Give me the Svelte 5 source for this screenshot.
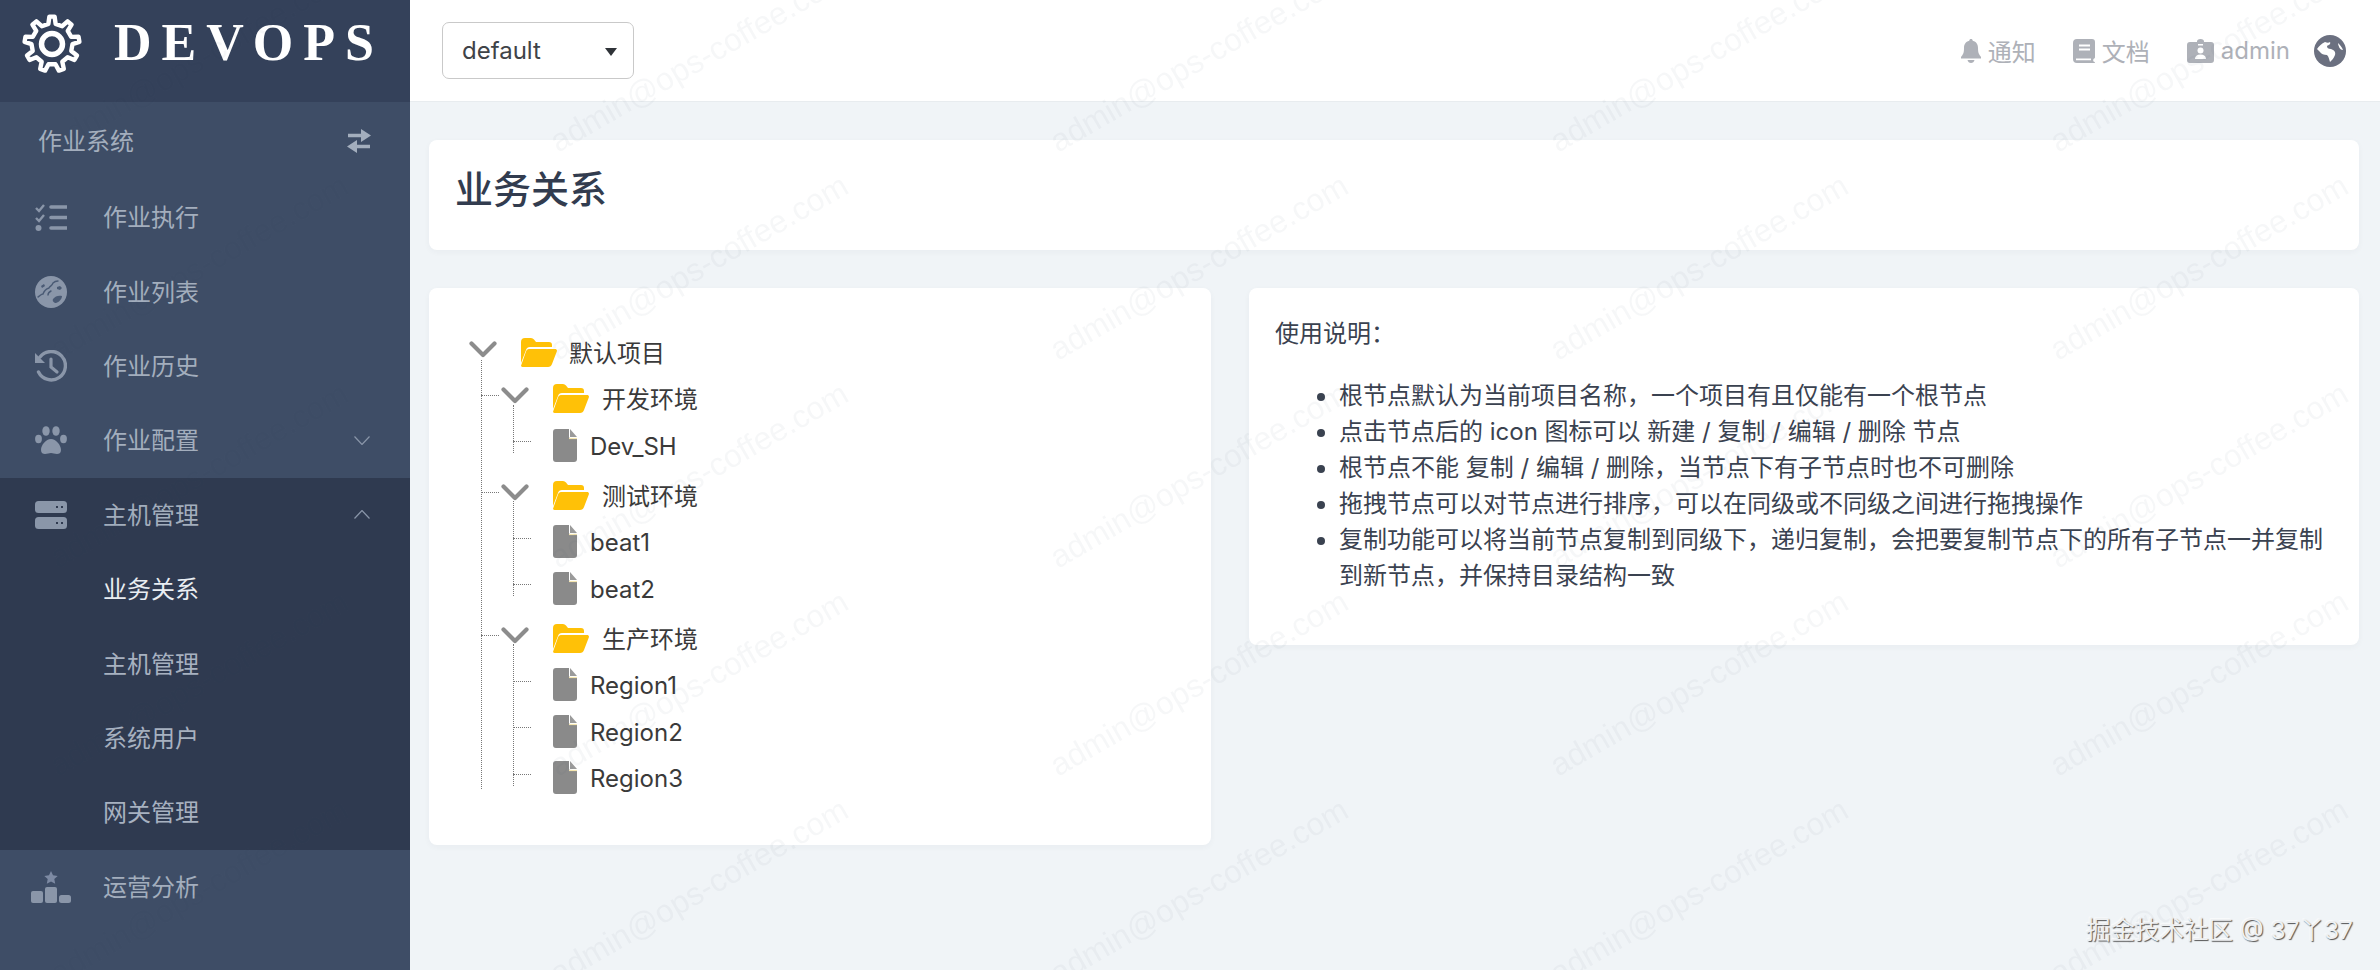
<script lang="ts">
  const menu = [
    { label: '作业执行', icon: 'tasks' },
    { label: '作业列表', icon: 'earth' },
    { label: '作业历史', icon: 'history' },
    { label: '作业配置', icon: 'paw', arrow: 'down' },
  ];
  const hostSub = [
    { label: '业务关系', active: true },
    { label: '主机管理' },
    { label: '系统用户' },
    { label: '网关管理' },
  ];
  const tree = [
    { name: '开发环境', leaves: ['Dev_SH'] },
    { name: '测试环境', leaves: ['beat1', 'beat2'] },
    { name: '生产环境', leaves: ['Region1', 'Region2', 'Region3'] },
  ];
  const notes = [
    '根节点默认为当前项目名称，一个项目有且仅能有一个根节点',
    '点击节点后的 icon 图标可以 新建 / 复制 / 编辑 / 删除 节点',
    '根节点不能 复制 / 编辑 / 删除，当节点下有子节点时也不可删除',
    '拖拽节点可以对节点进行排序，可以在同级或不同级之间进行拖拽操作',
    '复制功能可以将当前节点复制到同级下，递归复制，会把要复制节点下的所有子节点一并复制到新节点，并保持目录结构一致',
  ];

  function gearPath(cx: number, cy: number, teeth: number, ro: number, ri: number): string {
    const pts: string[] = [];
    const step = (Math.PI * 2) / teeth;
    for (let i = 0; i < teeth; i++) {
      const a = i * step - Math.PI / 2;
      const w = step * 0.17;
      const list = [
        [a - w * 1.5, ri],
        [a - w * 0.8, ro],
        [a + w * 0.8, ro],
        [a + w * 1.5, ri],
      ];
      for (const [t, r] of list) {
        pts.push(`${(cx + Math.cos(t) * r).toFixed(2)} ${(cy + Math.sin(t) * r).toFixed(2)}`);
      }
    }
    return 'M' + pts.join('L') + 'Z';
  }
</script>

{#snippet menuIcon(name)}
  {#if name === 'tasks'}
    <svg class="mi" viewBox="0 0 32 27" width="32" height="27">
      <path d="M1 4l3 3 5-6M1 14l3 3 5-6" fill="none" stroke="currentColor" stroke-width="2.4" />
      <circle cx="3.5" cy="24" r="3" fill="currentColor" />
      <path d="M16 3h16M16 13.500h16M16 24h16" stroke="currentColor" stroke-width="3.6" stroke-linecap="round" />
    </svg>
  {:else if name === 'earth'}
    <svg class="mi" viewBox="0 0 32 32" width="32" height="32">
      <circle cx="16" cy="16" r="16" fill="currentColor" />
      <path d="M3 21c2-1 3-3 5-3 1-3 3-5 6-6 1-2 3-2 4-5 1-1 3-2 5-2M13 19c0-2 1-3 3-4" fill="none" stroke="#4a5a74" stroke-width="1.400" stroke-linecap="round" />
      <path d="M18 23c2-3 6-4 9-3 0 3-3 6-6 7-2 0-4-2-3-4z" fill="#4a5a74" />
      <path d="M22 11l3-1 2 2-2 2-3-1zM6 10l3-2 1 2-3 2z" fill="#4a5a74" />
    </svg>
  {:else if name === 'history'}
    <svg class="mi" viewBox="0 0 32 32" width="32" height="32">
      <path d="M5 7A14.200 14.200 0 1 1 3.500 22" fill="none" stroke="currentColor" stroke-width="3.400" stroke-linecap="round" />
      <path d="M0 3l10 10H0z" fill="currentColor" />
      <path d="M16 9v8l6 5" fill="none" stroke="currentColor" stroke-width="3.200" stroke-linecap="round" />
    </svg>
  {:else if name === 'paw'}
    <svg class="mi" viewBox="0 0 32 29" width="32" height="29">
      <ellipse cx="3.500" cy="13" rx="3.400" ry="4.200" fill="currentColor" />
      <ellipse cx="11" cy="5" rx="3.700" ry="4.800" fill="currentColor" />
      <ellipse cx="21" cy="5" rx="3.700" ry="4.800" fill="currentColor" />
      <ellipse cx="28.500" cy="13" rx="3.400" ry="4.200" fill="currentColor" />
      <path d="M16 13c5 0 10 6 10 11 0 3-2 4-4 4-2.500 0-4-1-6-1s-3.500 1-6 1c-2 0-4-1-4-4 0-5 5-11 10-11z" fill="currentColor" />
    </svg>
  {:else if name === 'server'}
    <svg class="mi" viewBox="0 0 32 28" width="32" height="28">
      <rect width="32" height="12" rx="3.500" fill="currentColor" />
      <rect y="16" width="32" height="12" rx="3.500" fill="currentColor" />
      <path d="M21 6h2M26 6h2M21 22h2M26 22h2" stroke="#2f3a50" stroke-width="2" />
    </svg>
  {:else}
    <svg class="mi podium" viewBox="0 0 40 32" width="40" height="32">
      <path d="M20 0l2 4.300 4.700.6-3.400 3.200.9 4.700-4.200-2.300-4.200 2.300.9-4.700-3.400-3.200 4.700-.6z" fill="#7d8aa3" />
      <rect y="20" width="12" height="12" rx="2" fill="currentColor" />
      <rect x="14" y="16" width="12" height="16" rx="2" fill="currentColor" />
      <rect x="28" y="24" width="12" height="8" rx="2.500" fill="currentColor" />
    </svg>
  {/if}
{/snippet}

{#snippet chevron(dir)}
  <svg class="arrow" viewBox="0 0 16 9" width="16" height="9">
    <path d={dir === 'up' ? 'M.5 8.500l7.500-8 7.500 8' : 'M.5.5l7.500 8 7.500-8'} fill="none" stroke="currentColor" stroke-width="1.200" />
  </svg>
{/snippet}

{#snippet switcher()}
  <svg class="switcher" viewBox="0 0 28 17" width="28" height="17">
    <path d="M2.500 2.500L14 14 25.500 2.500" fill="none" stroke="#8c8c8c" stroke-width="4.200" stroke-linecap="round" stroke-linejoin="round" />
  </svg>
{/snippet}

{#snippet folder()}
  <svg class="folder" viewBox="0 0 36 29" width="36" height="29">
    <path d="M0 4a4 4 0 0 1 4-4h6a4 4 0 0 1 3 1.500L15 4h13a3 3 0 0 1 3 3v2H9c-2 0-3.500 1-4 3L0 25z" fill="#ffc107" />
    <path d="M8 11h26c1.500 0 2.300 1 1.800 2.400L31 26c-.7 2-2 3-4 3H1.500c-1.200 0-1.700-.8-1.300-1.800L5 13.500C5.500 12 6.500 11 8 11z" fill="#ffc107" />
  </svg>
{/snippet}

{#snippet file()}
  <svg class="file" viewBox="0 0 24 33" width="24" height="33">
    <path d="M3 0h13v8a1 1 0 0 0 1 1h7v21a3 3 0 0 1-3 3H3a3 3 0 0 1-3-3V3a3 3 0 0 1 3-3z" fill="#8a8a8a" />
    <path d="M16 9.500h8" stroke="#f5e6b0" stroke-width="1.200" />
    <path d="M17 0l7 8h-7z" fill="#9a9a9a" />
  </svg>
{/snippet}

<div class="app">
  <aside class="sidebar">
    <div class="logo">
      <svg viewBox="0 0 60 60" width="60" height="60">
        <path d={gearPath(30, 30, 9, 27.500, 20.500)} fill="none" stroke="#fff" stroke-width="4.400" stroke-linejoin="round" />
        <circle cx="30" cy="30" r="10.500" fill="none" stroke="#fff" stroke-width="5.500" />
      </svg>
      <span class="logo-text">DEVOPS</span>
    </div>
    <div class="system">
      <span>作业系统</span>
      <svg viewBox="0 0 24 24" width="24" height="24">
        <path d="M1 6.500h16M7 17.500h16" stroke="currentColor" stroke-width="3.600" fill="none" />
        <path d="M14 0l10 6.500-10 6.500zM10 11L0 17.500 10 24z" fill="currentColor" />
      </svg>
    </div>
    <nav>
      {#each menu as item}
        <div class="row">
          {@render menuIcon(item.icon)}
          <span>{item.label}</span>
          {#if item.arrow}{@render chevron(item.arrow)}{/if}
        </div>
      {/each}
      <div class="open">
        <div class="row">
          {@render menuIcon('server')}
          <span>主机管理</span>
          {@render chevron('up')}
        </div>
        {#each hostSub as sub}
          <div class="row sub" class:active={sub.active}><span>{sub.label}</span></div>
        {/each}
      </div>
      <div class="row">
        {@render menuIcon('podium')}
        <span>运营分析</span>
      </div>
    </nav>
  </aside>

  <div class="main">
    <header class="topbar">
      <div class="select">
        <span>default</span>
        <i class="caret"></i>
      </div>
      <div class="tools">
        <span class="tool">
          <svg viewBox="0 0 20 24" width="20" height="24">
            <path d="M10 0c1 0 1.700.7 1.700 1.700C15.500 2.500 17 5.500 17 9c0 5 1 6.500 3 9v1.500H0V18c2-2.500 3-4 3-9 0-3.500 1.500-6.500 5.300-7.300C8.300.7 9 0 10 0z" fill="currentColor" />
            <path d="M6.500 21h7c-.4 2-1.800 3-3.500 3s-3.100-1-3.500-3z" fill="currentColor" />
          </svg>
          通知
        </span>
        <span class="tool">
          <svg viewBox="0 0 22 24" width="22" height="24">
            <path d="M4 0h15a3 3 0 0 1 3 3v15c0 1-.5 1.500-1.500 2-.4 1-.4 1.600 0 2.500.9.300 1.500.7 1.500 1.500H4a4 4 0 0 1-4-4V4a4 4 0 0 1 4-4z" fill="currentColor" />
            <path d="M6 6.500h11M6 10.500h11M3 20.300h15" stroke="#fff" stroke-width="1.800" />
          </svg>
          文档
        </span>
        <span class="tool">
          <svg viewBox="0 0 27 24" width="27" height="24">
            <path d="M3 3h7V2.500a3.500 2.500 0 0 1 7 0V3h7a3 3 0 0 1 3 3v15a3 3 0 0 1-3 3H3a3 3 0 0 1-3-3V6a3 3 0 0 1 3-3z" fill="currentColor" />
            <circle cx="13.500" cy="11.500" r="3" fill="#fff" />
            <path d="M8 20c0-3 2-4.500 5.500-4.500S19 17 19 20zM11 5h5v1.500h-5z" fill="#fff" />
          </svg>
          admin
        </span>
        <svg class="globe" viewBox="0 0 32 32" width="32" height="32">
          <circle cx="16" cy="16" r="16" fill="#6b7080" />
          <path d="M3 14c2-3 4-5 8-7 2 1 4 1 5 0 1 2-1 3-3 4 0 2 1 3 4 3 3 1 5 3 4 6-1 3-3 5-5 7-1-3-1-5-3-7-3 0-6-1-7-3-1-1-2-2-3-3zM24 8c2 2 4 4 5 7-2 0-3-1-4-3 0-1-1-2-1-4z" fill="#fff" />
        </svg>
      </div>
    </header>

    <div class="content">
      <div class="card title-card"><h1>业务关系</h1></div>
      <div class="columns">
        <div class="card tree-card">
          <div class="node">
            {@render switcher()}
            {@render folder()}
            <span class="name cjk-name root-name">默认项目</span>
          </div>
          <ul class="groups">
            {#each tree as group}
              <li>
                <div class="node">
                  {@render switcher()}
                  {@render folder()}
                  <span class="name cjk-name">{group.name}</span>
                </div>
                <ul class="leaves">
                  {#each group.leaves as leaf}
                    <li>
                      <div class="node">
                        {@render file()}
                        <span class="name leaf-name">{leaf}</span>
                      </div>
                    </li>
                  {/each}
                </ul>
              </li>
            {/each}
          </ul>
        </div>
        <div class="card help-card">
          <p>使用说明：</p>
          <ul>
            {#each notes as note}
              <li>{note}</li>
            {/each}
          </ul>
        </div>
      </div>
    </div>
  </div>

  <svg class="watermark" width="2380" height="970" aria-hidden="true">
    <defs>
      <pattern id="wm" width="500" height="208" patternUnits="userSpaceOnUse" patternTransform="translate(48 -35)">
        <text transform="translate(10 188) rotate(-30)">admin@ops-coffee.com</text>
      </pattern>
    </defs>
    <rect width="2380" height="970" fill="url(#wm)" />
  </svg>
  <div class="credit">掘金技术社区 @ 37丫37</div>
</div>

<style>
  :global(body) {
    margin: 0;
    background: #f0f4f7;
  }
  .app {
    position: relative;
    display: grid;
    grid-template-columns: 410px 1fr;
    height: 970px;
    overflow: hidden;
    font-family: Inter, 'Noto Sans CJK SC', sans-serif;
    font-size: 24px;
    color: #3a4250;
  }

  .sidebar {
    background: #3e4d66;
    color: #a3aebd;
  }
  .logo {
    display: flex;
    align-items: center;
    height: 102px;
    padding-left: 22px;
    padding-bottom: 14px;
    box-sizing: border-box;
    background: #34415a;
  }
  .logo-text {
    margin-left: 32px;
    margin-bottom: 2px;
    font-family: 'Liberation Serif', serif;
    font-weight: 700;
    font-size: 52px;
    line-height: 1;
    letter-spacing: 10px;
    color: #fff;
  }
  .system {
    display: flex;
    align-items: center;
    justify-content: space-between;
    height: 78px;
    padding: 0 39px 0 38px;
  }
  .system span {
    margin-bottom: 3px;
  }
  .row {
    display: flex;
    align-items: center;
    gap: 36px;
    height: 74.400px;
    padding: 0 40px 0 35px;
  }
  .row span {
    margin-bottom: 3px;
  }
  .mi {
    flex: none;
    color: #8a96a9;
  }
  .podium {
    margin: 0 -4px;
  }
  .arrow {
    margin-left: auto;
    color: #8a96a9;
  }
  .open {
    background: #2f3a50;
  }
  .sub {
    padding-left: 103px;
    color: #a7b1c0;
  }
  .sub.active {
    color: #e9edf2;
  }

  .main {
    min-width: 0;
  }
  .topbar {
    display: flex;
    align-items: center;
    justify-content: space-between;
    height: 102px;
    padding: 0 34px 0 32px;
    box-sizing: border-box;
    background: #fff;
    border-bottom: 1px solid #e8ecef;
  }
  .select {
    display: flex;
    align-items: center;
    justify-content: space-between;
    box-sizing: border-box;
    width: 192px;
    height: 57px;
    padding: 0 16px 0 19px;
    border: 1px solid #c9c9c9;
    border-radius: 7px;
    color: #3f4348;
  }
  .caret {
    margin-top: 3px;
    border-left: 6px solid transparent;
    border-right: 6px solid transparent;
    border-top: 8px solid #2f3338;
  }
  .tools {
    display: flex;
    align-items: center;
    color: #aeb1b8;
  }
  .tool {
    display: flex;
    align-items: center;
    gap: 7px;
    margin-right: 37px;
  }
  .tool:nth-child(3) {
    margin-right: 24px;
  }

  .content {
    padding: 38px 21px 0 19px;
  }
  .card {
    background: #fff;
    border-radius: 8px;
    box-shadow: 0 2px 6px rgba(40, 60, 80, 0.04);
  }
  .title-card {
    display: flex;
    align-items: center;
    height: 110px;
    box-sizing: border-box;
    padding: 0 0 17px 26px;
    margin-bottom: 38px;
  }
  h1 {
    margin: 0;
    font-size: 38px;
    font-weight: 500;
    color: #323c4f;
  }
  .columns {
    display: grid;
    grid-template-columns: 782px 1fr;
    gap: 38px;
    align-items: start;
  }

  .tree-card {
    padding: 40.750px 0 40.750px 40px;
    color: #3a3a3a;
  }
  .tree-card ul {
    list-style: none;
    margin: 0;
    padding: 0;
  }
  .node {
    display: flex;
    align-items: center;
    height: 46.500px;
  }
  .switcher {
    flex: none;
    margin-right: 24px;
    margin-top: -6px;
  }
  .folder,
  .file {
    flex: none;
  }
  .name {
    white-space: nowrap;
  }
  .cjk-name {
    margin: 0 0 2px 13px;
  }
  .root-name {
    margin-left: 12px;
  }
  .leaf-name {
    margin: 2px 0 0 13px;
  }
  .groups {
    position: relative;
    padding-left: 32px !important;
  }
  .groups::before {
    content: '';
    position: absolute;
    left: 12px;
    top: -15px;
    bottom: 11.750px;
    border-left: 1px dotted #777;
  }
  .groups > li {
    position: relative;
  }
  .groups > li::before {
    content: '';
    position: absolute;
    left: -20px;
    top: 19.750px;
    width: 18px;
    border-top: 1px dotted #777;
  }
  .leaves {
    position: relative;
    padding-left: 52px !important;
    margin-bottom: 3.500px !important;
  }
  .leaves::before {
    content: '';
    position: absolute;
    left: 12px;
    top: -17px;
    bottom: 15px;
    border-left: 1px dotted #777;
  }
  .leaves > li {
    position: relative;
  }
  .leaves > li::before {
    content: '';
    position: absolute;
    left: -40px;
    top: 19.250px;
    width: 18px;
    border-top: 1px dotted #777;
  }

  .help-card {
    padding: 27.500px 26px 51px;
    line-height: 36px;
  }
  .help-card p {
    margin: 0 0 26px;
  }
  .help-card ul {
    margin: 0;
    padding-left: 64px;
  }

  .watermark {
    position: absolute;
    inset: 0;
    pointer-events: none;
  }
  .watermark text {
    font-family: 'Liberation Sans', sans-serif;
    font-size: 32px;
    fill: rgba(30, 50, 70, 0.038);
  }
  .credit {
    position: absolute;
    right: 27px;
    bottom: 25px;
    font-size: 24.500px;
    line-height: 30px;
    color: #eef0f2;
    text-shadow: 1px 1px 1px #555, -1px -1px 1px rgba(255, 255, 255, 0.6);
  }
</style>
